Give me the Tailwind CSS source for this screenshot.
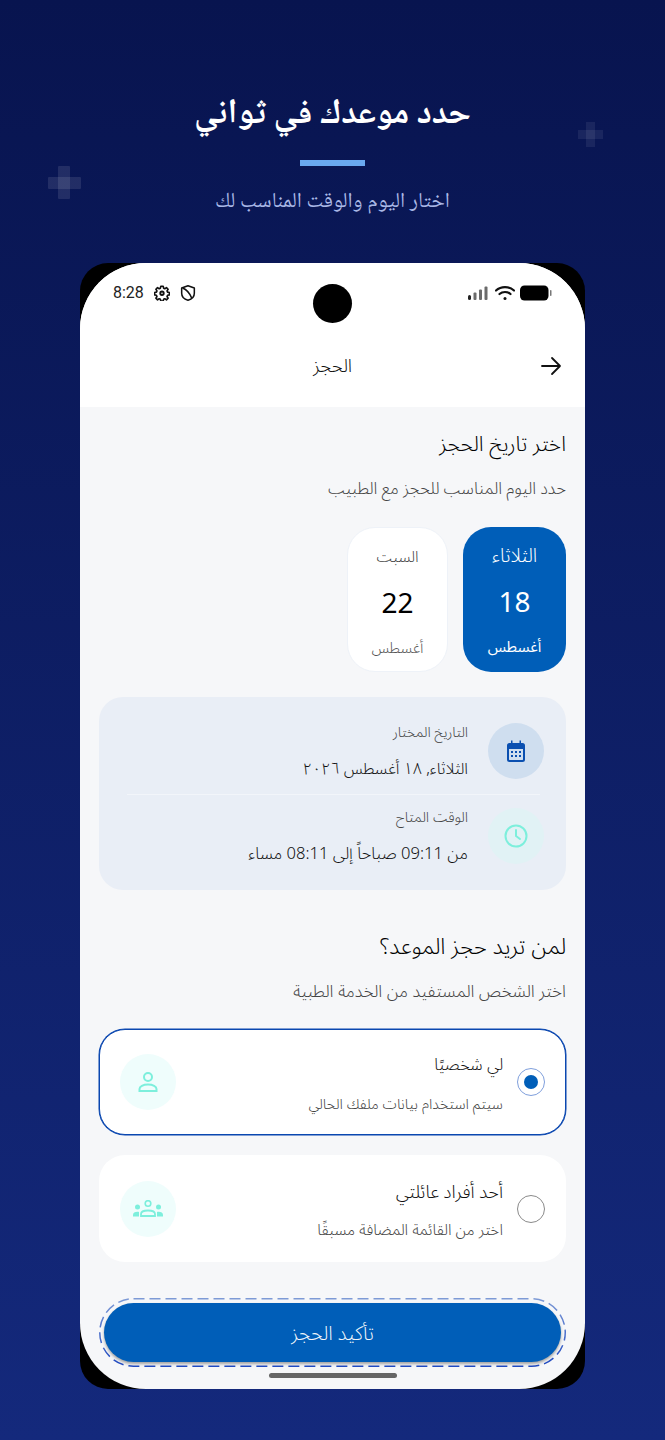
<!DOCTYPE html>
<html lang="ar" dir="rtl">
<head>
    <meta charset="UTF-8">
    <meta name="viewport" content="width=device-width, initial-scale=1.0">
    <title>الحجز</title>
    <script src="https://cdn.jsdelivr.net/npm/@tailwindcss/browser@4"></script>
</head>
<body class="relative w-[665px] h-[1440px] overflow-hidden bg-gradient-to-b from-[#08144f] to-[#14297c] font-['Noto_Sans','Noto_Sans_Arabic','DejaVu_Sans',sans-serif]">
    <!-- decorative crosses -->
    <div class="absolute left-[48px] top-[166px] w-[33px] h-[33px]">
        <div class="absolute left-[10px] top-0 w-[12px] h-[33px] rounded-[1px] bg-white/10"></div>
        <div class="absolute left-0 top-[11px] w-[33px] h-[12px] rounded-[1px] bg-white/10"></div>
    </div>
    <div class="absolute left-[578px] top-[122px] w-[25px] h-[25px]">
        <div class="absolute left-[8px] top-0 w-[9px] h-[25px] bg-white/7"></div>
        <div class="absolute left-0 top-[8px] w-[25px] h-[9px] bg-white/7"></div>
    </div>

    <header class="h-[263px] flex flex-col items-center">
        <h1 class="mt-[90px] h-[52px] leading-[52px] text-[34.600px] font-bold text-white font-['Noto_Naskh_Arabic','Amiri','Scheherazade_New','DejaVu_Sans',serif]">حدد موعدك في ثواني</h1>
        <div class="mt-[18px] w-[65px] h-[6px] bg-[#6aa9f0]"></div>
        <p class="mt-[21px] h-[32px] leading-[32px] text-[21.400px] text-[#a9b8e6] font-['Noto_Naskh_Arabic','Amiri','Scheherazade_New','DejaVu_Sans',serif]">اختار اليوم والوقت المناسب لك</p>
    </header>

    <!-- phone -->
    <div class="relative mx-[80px] w-[505px] h-[1126px] bg-black rounded-[28px]">
        <div class="relative h-full rounded-[66px] bg-[#f6f7f9] overflow-hidden flex flex-col">
            <div class="bg-white h-[144px] shrink-0 relative">
                <div dir="ltr" class="h-[60px] px-[33px] pt-[20px] flex items-start justify-between">
                    <div class="flex items-center h-[20px] text-[16px] text-[#222] font-['Roboto',sans-serif]">
                        <span>8:28</span>
                        <svg class="ml-[10px] w-[16px] h-[16px]" viewBox="0 0 24 24" fill="none" stroke="#111" stroke-width="2.800" stroke-linejoin="round"><path d="M10 1.500h4l.7 3.200 2.100.9 2.800-1.800 2.800 2.800-1.800 2.800.9 2.100 3.200.7v4l-3.200.7-.9 2.100 1.800 2.800-2.800 2.800-2.800-1.800-2.100.9-.7 3.200h-4l-.7-3.200-2.100-.9-2.800 1.800-2.800-2.800 1.800-2.800-.9-2.100-3.200-.7v-4l3.200-.7.9-2.100-1.800-2.800 2.800-2.800 2.800 1.800 2.100-.9z" transform="translate(1.440 .6) scale(.88)"/><circle cx="12" cy="12.400" r="2.600"/></svg>
                        <svg class="ml-[10px] w-[16px] h-[18px]" viewBox="0 0 24 26" fill="none" stroke="#111" stroke-width="2.300" stroke-linejoin="round"><path d="M12 2l9.500 3.500v8c0 5.500-4 9-9.500 10.500-5.500-1.500-9.500-5-9.500-10.500v-8z"/><path d="M4 5.500c5 2 10 6.500 13.500 15"/></svg>
                    </div>
                    <div class="flex items-center h-[20px] gap-[5px]">
                        <svg class="w-[22px] h-[16px]" viewBox="0 0 22 16" fill="#6b6b6b"><rect x="0" y="10" width="3" height="5" rx="1.500" fill="#222"/><rect x="5.500" y="7.500" width="3" height="7.500" rx="1"/><rect x="11" y="4.500" width="3" height="10.500" rx="1"/><rect x="16.500" y="1.500" width="3" height="13.500" rx="1"/></svg>
                        <svg class="w-[20px] h-[16px]" viewBox="0 0 20 16" fill="none" stroke="#111" stroke-width="2.200" stroke-linecap="round"><path d="M1 5.500c5-4.600 13-4.600 18 0"/><path d="M4.500 9c3-2.700 8-2.700 11 0"/><circle cx="10" cy="13.500" r="1.500" fill="#111" stroke="none"/></svg>
                        <svg class="w-[32px] h-[16px]" viewBox="0 0 32 16"><rect x="0" y="0.500" width="28.500" height="15" rx="4.500" fill="#000"/><rect x="30" y="5" width="1.500" height="6" rx="0.700" fill="#777"/></svg>
                    </div>
                </div>
                <div class="absolute left-[233px] top-[21px] w-[39px] h-[39px] rounded-full bg-black"></div>
                <div class="absolute inset-x-0 top-[88px] h-[28px] leading-[28px] text-center text-[18.500px] font-light text-[#111]">الحجز</div>
                <svg class="absolute left-[460px] top-[92px] w-[22px] h-[22px]" viewBox="0 0 22 22" fill="none" stroke="#111" stroke-width="1.800" stroke-linecap="round" stroke-linejoin="round"><path d="M2 11h18M12 3l8 8-8 8"/></svg>
            </div>

            <main class="px-[19px] flex-1 flex flex-col">
                <h2 class="mt-[22px] h-[28px] leading-[28px] text-[21px] font-light text-black">اختر تاريخ الحجز</h2>
                <p class="mt-[21px] h-[20px] leading-[20px] text-[16.700px] font-light text-[#444]">حدد اليوم المناسب للحجز مع الطبيب</p>

                <div class="mt-[29px] flex gap-[15px]">
                    <div class="w-[103px] h-[145px] rounded-[28px] bg-[#005eb8] text-white flex flex-col items-center pt-[18px]">
                        <span class="h-[20px] leading-[20px] text-[19px] font-light">الثلاثاء</span>
                        <span class="mt-[18px] h-[36px] leading-[36px] text-[28px]">18</span>
                        <span class="mt-[17px] h-[20px] leading-[20px] text-[15px] font-normal">أغسطس</span>
                    </div>
                    <div class="w-[101px] h-[145px] rounded-[28px] bg-white border border-[#eef2f8] flex flex-col items-center pt-[18px]">
                        <span class="h-[20px] leading-[20px] text-[15.500px] font-light text-[#444]">السبت</span>
                        <span class="mt-[18px] h-[36px] leading-[36px] text-[28px] text-black">22</span>
                        <span class="mt-[17px] h-[20px] leading-[20px] text-[15px] font-light text-[#555]">أغسطس</span>
                    </div>
                </div>

                <div class="mt-[25px] h-[193px] rounded-[24px] bg-[#e9eef6] px-[22px] pt-[26px]">
                    <div class="flex items-center gap-[20px] h-[56px]">
                        <div class="w-[56px] h-[56px] rounded-full bg-[#cfdeef] flex items-center justify-center">
                            <svg class="w-[24px] h-[24px]" viewBox="0 0 24 24" fill="#0a4fb0"><path d="M7 1.500h1.500V4h7V1.500H17V4h1.500A2.500 2.500 0 0 1 21 6.500v14a2.500 2.500 0 0 1-2.500 2.500h-13A2.500 2.500 0 0 1 3 20.500v-14A2.500 2.500 0 0 1 5.500 4H7zM5 10v10.500c0 .3.200.5.500.5h13c.3 0 .5-.2.500-.5V10z"/><path d="M7 12h2v2H7zM11 12h2v2h-2zM15 12h2v2h-2zM7 16h2v2H7zM11 16h2v2h-2zM15 16h2v2h-2z"/></svg>
                        </div>
                        <div class="pb-[2px]">
                            <div class="h-[20px] leading-[20px] text-[14.200px] font-light text-[#444]">التاريخ المختار</div>
                            <div class="mt-[15px] h-[22px] leading-[22px] text-[16.100px] font-light text-[#111]">الثلاثاء, ١٨ أغسطس ٢٠٢٦</div>
                        </div>
                    </div>
                    <div class="mt-[15px] mr-[4px] ml-[6px] border-t border-[#f2f5fa]"></div>
                    <div class="mt-[13px] flex items-center gap-[20px] h-[56px]">
                        <div class="w-[56px] h-[56px] rounded-full bg-[#e1f2f5] flex items-center justify-center">
                            <svg class="w-[26px] h-[26px]" viewBox="0 0 26 26" fill="none" stroke="#7defdc" stroke-width="2" stroke-linecap="round" stroke-linejoin="round"><circle cx="13" cy="13" r="10.500"/><path d="M13 7v6l4 3"/></svg>
                        </div>
                        <div class="pb-[2px]">
                            <div class="h-[20px] leading-[20px] text-[14.400px] font-light text-[#444]">الوقت المتاح</div>
                            <div class="mt-[15px] h-[22px] leading-[22px] text-[16.600px] font-light text-[#111]">من 09:11 صباحاً إلى 08:11 مساء</div>
                        </div>
                    </div>
                </div>

                <h2 class="mt-[42px] h-[28px] leading-[28px] text-[22.300px] font-light text-black">لمن تريد حجز الموعد؟</h2>
                <p class="mt-[21px] h-[20px] leading-[20px] text-[17.100px] font-light text-[#444]">اختر الشخص المستفيد من الخدمة الطبية</p>

                <div class="mt-[28px] h-[106px] rounded-[26px] bg-white border border-[#0a47b0] shadow-[0_0_0_0.5px_#0a47b0] flex items-center pr-[20px] pl-[20px]">
                    <div class="w-[28px] h-[28px] rounded-full border border-[#7f9fdc] flex items-center justify-center">
                        <div class="w-[14px] h-[14px] rounded-full bg-[#005eb8]"></div>
                    </div>
                    <div class="mr-[14px] flex-1">
                        <div class="h-[24px] leading-[24px] text-[16.300px] font-light text-[#111]">لي شخصيًا</div>
                        <div class="mt-[18px] h-[18px] leading-[18px] text-[14.700px] font-light text-[#444]">سيتم استخدام بيانات ملفك الحالي</div>
                    </div>
                    <div class="w-[56px] h-[56px] rounded-full bg-[#effdfc] flex items-center justify-center">
                        <svg class="w-[22px] h-[22px]" viewBox="0 0 22 22" fill="none" stroke="#7defdc" stroke-width="2"><circle cx="11" cy="6" r="4"/><path d="M2.500 20v-2c0-2.500 3.500-4.500 8.500-4.500s8.500 2 8.500 4.500v2z"/></svg>
                    </div>
                </div>

                <div class="mt-[20px] h-[107px] rounded-[26px] bg-white flex items-center pr-[21px] pl-[21px]">
                    <div class="w-[28px] h-[28px] rounded-full border border-[#8a8a8a]"></div>
                    <div class="mr-[14px] flex-1">
                        <div class="h-[24px] leading-[24px] text-[18px] font-light text-[#111]">أحد أفراد عائلتي</div>
                        <div class="mt-[18px] h-[18px] leading-[18px] text-[15.400px] font-light text-[#444]">اختر من القائمة المضافة مسبقًا</div>
                    </div>
                    <div class="w-[56px] h-[56px] rounded-full bg-[#effdfc] flex items-center justify-center">
                        <svg class="w-[30px] h-[18px]" viewBox="0 0 30 18" fill="#7defdc"><circle cx="4.500" cy="7" r="2.500"/><circle cx="25.500" cy="7" r="2.500"/><path d="M0 16.500v-1.500c0-2 1.800-3.200 4.500-3.200.6 0 1 .1 1.500.2v4.500zM30 16.500v-1.500c0-2-1.800-3.200-4.500-3.200-.6 0-1 .1-1.500.2v4.500z"/><circle cx="15" cy="3.500" r="2.800" fill="none" stroke="#7defdc" stroke-width="1.600"/><path d="M8 16v-2c0-2.500 3-3.500 7-3.500s7 1 7 3.500v2z" fill="none" stroke="#7defdc" stroke-width="1.800"/></svg>
                    </div>
                </div>

                <div class="relative mt-[36px] h-[69px] px-[5px] pt-[5px] pb-[5px]">
                    <svg class="absolute inset-0 w-[467px] h-[69px]" viewBox="0 0 467 69" fill="none"><defs><linearGradient id="dash" x1="0" y1="0" x2="0" y2="1"><stop offset="0" stop-color="#7d9ad6"/><stop offset="1" stop-color="#1f49c0"/></linearGradient></defs><rect x="0.750" y="0.750" width="465.500" height="67.500" rx="33.750" stroke="url(#dash)" stroke-width="1.500" stroke-dasharray="11 5"/></svg>
                    <button class="w-full h-[59px] rounded-full bg-[#005eb8] text-white/95 text-[19.700px] font-light shadow-[0_2px_3px_rgba(0,0,0,0.35)]">تأكيد الحجز</button>
                </div>
                <div class="mt-[6px] mx-auto w-[128px] h-[5px] rounded-full bg-[#666]"></div>
            </main>
        </div>
    </div>
</body>
</html>
